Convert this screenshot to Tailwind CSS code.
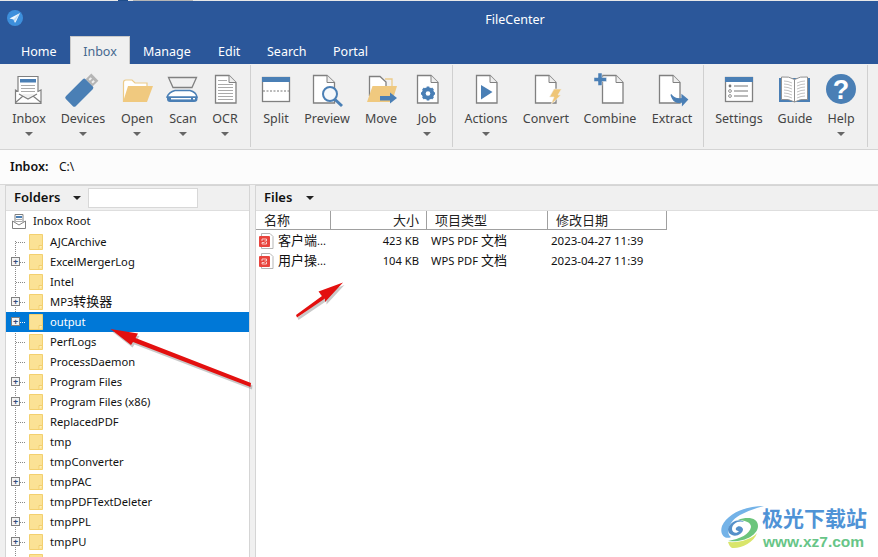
<!DOCTYPE html>
<html><head><meta charset="utf-8"><script src="https://cdn.jsdelivr.net/npm/@tailwindcss/browser@4"></script></head>
<body class="w-[878px] h-[557px] overflow-hidden relative bg-[#f0f0f0] font-['Noto_Sans','Noto_Sans_CJK_SC',sans-serif] text-[12px] text-[#222]">

<div class="flex h-px bg-[#e8e8e8]"><div class="w-[118px]"></div><div class="w-[10px] bg-[#1f4e8c]"></div><div class="w-[5px]"></div><div class="w-[60px] bg-[#b5b5b5]"></div></div>

<header class="h-[63px] bg-[#2b579a] flex flex-col">
  <div class="h-[35px] relative flex items-center justify-center pl-[152px] pt-[3px] text-white text-[12.5px]">
    <svg class="absolute left-[7px] top-[9px]" width="16" height="16" viewBox="0 0 16 16"><circle cx="8" cy="8" r="8" fill="#3d8fdc"/><path d="M13 3 L2.500 8.500 L6.500 9.500 L8 13 L9.500 10.500 Z" fill="#eef6fd"/><path d="M13 3 L6.500 9.500 L7.500 12 Z" fill="#b9d9f5"/></svg>
    <span>FileCenter</span>
  </div>
  <nav class="h-[28px] flex text-white text-[12.5px]">
    <a class="w-[70px] pl-[21px] pt-[7px]">Home</a>
    <a class="w-[60px] h-[28px] bg-[#f0f0f0] border border-b-0 border-[#c9c9c9] text-[#46688f] text-center pt-[6px]">Inbox</a>
    <a class="w-[73px] pl-[13px] pt-[7px]">Manage</a>
    <a class="w-[49px] pl-[15px] pt-[7px]">Edit</a>
    <a class="w-[66px] pl-[15px] pt-[7px]">Search</a>
    <a class="pl-[15px] pt-[7px]">Portal</a>
  </nav>
</header>

<section class="h-[86px] border-b border-[#d4d4d4] bg-[#f0f0f0] flex pl-[5px] text-[12.5px] text-[#444]">
  <!-- Inbox -->
  <div class="w-[48px] flex flex-col items-center pt-[6px] h-[84px]">
    <svg width="44" height="38" viewBox="0 0 44 38" class="shrink-0"><path d="M11 24V6.500H31V24" fill="#fff" stroke="#808080" stroke-width="1.200"/><rect x="13" y="9" width="16" height="3.500" fill="#4a7fb5"/><path d="M14 15.500H28M14 18.500H28M14 21.500H28" stroke="#aaa"/><path d="M8.500 20V33H34V20L21 28Z" fill="#fff"/><path d="M11 21.500 L8.500 20V33.300H34V20L31 21.500M8.500 32.500L16 26M34 32.500L26 26M12 24L21 29L30 24" fill="none" stroke="#808080" stroke-width="1.200"/></svg>
    <span class="leading-[18px] mt-[2px]">Inbox</span><i class="mt-[4px] w-0 h-0 border-x-[4px] border-x-transparent border-t-[4px] border-t-[#666]"></i>
  </div>
  <!-- Devices -->
  <div class="w-[60px] flex flex-col items-center pt-[6px] h-[84px]">
    <svg width="44" height="38" viewBox="0 0 44 38" class="shrink-0"><g transform="rotate(-45 19 22)"><rect x="4" y="15" width="28" height="14" rx="2" fill="#4a7fb5"/><rect x="32" y="17" width="8" height="10" fill="#b5b5b5"/><rect x="34" y="19" width="3" height="2" fill="#eee"/><rect x="34" y="23" width="3" height="2" fill="#eee"/></g></svg>
    <span class="leading-[18px] mt-[2px]">Devices</span><i class="mt-[4px] w-0 h-0 border-x-[4px] border-x-transparent border-t-[4px] border-t-[#666]"></i>
  </div>
  <!-- Open -->
  <div class="w-[48px] flex flex-col items-center pt-[6px] h-[84px]">
    <svg width="44" height="38" viewBox="0 0 44 38" class="shrink-0"><path d="M8.500 32V12.500Q8.500 10 11 10H17L20 13H32V18" fill="#fff" stroke="#eccb8a" stroke-width="1.200"/><path d="M8 32L13 16H38L32 32Z" fill="#f0c97f"/></svg>
    <span class="leading-[18px] mt-[2px]">Open</span><i class="mt-[4px] w-0 h-0 border-x-[4px] border-x-transparent border-t-[4px] border-t-[#666]"></i>
  </div>
  <!-- Scan -->
  <div class="w-[44px] flex flex-col items-center pt-[6px] h-[84px]">
    <svg width="44" height="38" viewBox="0 0 44 38" class="shrink-0"><path d="M7.500 7.500H35.500L31 17.500H12Z" fill="none" stroke="#808080" stroke-width="1.300"/><path d="M6 27Q8 22 14 20.500H29Q35 22 36 27Z" fill="#fff" stroke="#4a7fb5" stroke-width="1.500"/><path d="M6 27H36.500V29Q36.500 32 33 32H9Q6 32 6 29Z" fill="#4a7fb5"/><rect x="10" y="28" width="20" height="1.400" fill="#fff"/><rect x="32" y="28" width="2" height="1.400" fill="#fff"/></svg>
    <span class="leading-[18px] mt-[2px]">Scan</span><i class="mt-[4px] w-0 h-0 border-x-[4px] border-x-transparent border-t-[4px] border-t-[#666]"></i>
  </div>
  <!-- OCR -->
  <div class="w-[40px] flex flex-col items-center pt-[6px] h-[84px]">
    <svg width="44" height="38" viewBox="0 0 44 38" class="shrink-0"><path d="M12.500 5.500H26L33 12.500V33H12.500Z" fill="#fff" stroke="#808080" stroke-width="1.300"/><path d="M26 5.500V12.500H33" fill="#eee" stroke="#808080"/><path d="M15 10.500H24M15 14.500H30M15 17.500H30M15 20.500H30M15 23.500H30M15 26.500H30M15 29.500H30" stroke="#aaa"/></svg>
    <span class="leading-[18px] mt-[2px]">OCR</span><i class="mt-[4px] w-0 h-0 border-x-[4px] border-x-transparent border-t-[4px] border-t-[#666]"></i>
  </div>
  <div class="w-[5px]"></div>
  <div class="w-px h-[82px] mt-[1px] bg-[#d0d0d0]"></div>
  <!-- Split -->
  <div class="w-[50px] flex flex-col items-center pt-[6px] h-[84px]">
    <svg width="44" height="38" viewBox="0 0 44 38" class="shrink-0"><rect x="8.500" y="7.500" width="27" height="24" fill="#fff" stroke="#808080" stroke-width="1.300"/><rect x="8" y="7" width="28" height="5" fill="#4a7fb5"/><path d="M9 21H35" stroke="#777" stroke-dasharray="2 1.500"/></svg>
    <span class="leading-[18px] mt-[2px]">Split</span>
  </div>
  <!-- Preview -->
  <div class="w-[52px] flex flex-col items-center pt-[6px] h-[84px]">
    <svg width="44" height="38" viewBox="0 0 44 38" class="shrink-0"><path d="M8.500 5.500H22L29.500 12.500V33H8.500Z" fill="#fff" stroke="#808080" stroke-width="1.300"/><path d="M22 5.500V12.500H29.500" fill="#eee" stroke="#808080"/><circle cx="25" cy="24" r="7" fill="#f5f8fb" stroke="#4a7fb5" stroke-width="2"/><path d="M30 29.500L37 36" stroke="#4a7fb5" stroke-width="3"/></svg>
    <span class="leading-[18px] mt-[2px]">Preview</span>
  </div>
  <!-- Move -->
  <div class="w-[56px] flex flex-col items-center pt-[6px] h-[84px]">
    <svg width="44" height="38" viewBox="0 0 44 38" class="shrink-0"><path d="M26 9H33V18" fill="none" stroke="#eccb8a" stroke-width="1.300"/><path d="M10.500 26V6.500H21L27 12V18" fill="#fff" stroke="#808080" stroke-width="1.300"/><path d="M8 32L13.500 16H38L33 32Z" fill="#f0c97f"/><path d="M21 26H31V22.500L38 28L31 33.500V30.500H21Z" fill="#4a7fb5"/></svg>
    <span class="leading-[18px] mt-[2px]">Move</span>
  </div>
  <!-- Job -->
  <div class="w-[36px] flex flex-col items-center pt-[6px] h-[84px]">
    <svg width="44" height="38" viewBox="0 0 44 38" class="shrink-0"><path d="M12.500 5.500H26L33 12.500V33H12.500Z" fill="#fff" stroke="#808080" stroke-width="1.300"/><path d="M26 5.500V12.500H33" fill="#eee" stroke="#808080"/><circle cx="23" cy="23.500" r="4.500" fill="none" stroke="#4a7fb5" stroke-width="3.500"/><path d="M23 16.500V30.500M16 23.500H30M18 18.500L28 28.500M28 18.500L18 28.500" stroke="#4a7fb5" stroke-width="2.600"/><circle cx="23" cy="23.500" r="2.300" fill="#fff"/></svg>
    <span class="leading-[18px] mt-[2px]">Job</span><i class="mt-[4px] w-0 h-0 border-x-[4px] border-x-transparent border-t-[4px] border-t-[#666]"></i>
  </div>
  <div class="w-[7px]"></div>
  <div class="w-px h-[82px] mt-[1px] bg-[#d0d0d0]"></div>
  <!-- Actions -->
  <div class="w-[66px] flex flex-col items-center pt-[6px] h-[84px]">
    <svg width="44" height="38" viewBox="0 0 44 38" class="shrink-0"><path d="M12.500 5.500H26L33 12.500V33H12.500Z" fill="#fff" stroke="#808080" stroke-width="1.300"/><path d="M26 5.500V12.500H33" fill="#eee" stroke="#808080"/><path d="M17 15L28.500 22L17 29.500Z" fill="#4a7fb5"/></svg>
    <span class="leading-[18px] mt-[2px]">Actions</span><i class="mt-[4px] w-0 h-0 border-x-[4px] border-x-transparent border-t-[4px] border-t-[#666]"></i>
  </div>
  <!-- Convert -->
  <div class="w-[54px] flex flex-col items-center pt-[6px] h-[84px]">
    <svg width="44" height="38" viewBox="0 0 44 38" class="shrink-0"><path d="M11.500 5.500H25L32 12.500V33H11.500Z" fill="#fff" stroke="#808080" stroke-width="1.300"/><path d="M25 5.500V12.500H32" fill="#eee" stroke="#808080"/><path d="M30 19H37.500L34 25H37L27 34.500L30 27H25.500Z" fill="#efc677" stroke="#f0f0f0" stroke-width=".6"/></svg>
    <span class="leading-[18px] mt-[2px]">Convert</span>
  </div>
  <!-- Combine -->
  <div class="w-[74px] flex flex-col items-center pt-[6px] h-[84px]">
    <svg width="44" height="38" viewBox="0 0 44 38" class="shrink-0"><path d="M14.500 5.500H28L35 12.500V33H14.500Z" fill="#fff" stroke="#808080" stroke-width="1.300"/><path d="M28 5.500V12.500H35" fill="#eee" stroke="#808080"/><path d="M10 3H14V7.500H18.500V11.500H14V15.500H10V11.500H6V7.500H10Z" fill="#4a7fb5" stroke="#f0f0f0" stroke-width=".5"/></svg>
    <span class="leading-[18px] mt-[2px]">Combine</span>
  </div>
  <!-- Extract -->
  <div class="w-[50px] flex flex-col items-center pt-[6px] h-[84px]">
    <svg width="44" height="38" viewBox="0 0 44 38" class="shrink-0"><path d="M9.500 5.500H23L30 12.500V33H9.500Z" fill="#fff" stroke="#808080" stroke-width="1.300"/><path d="M23 5.500V12.500H30" fill="#eee" stroke="#808080"/><path d="M21 24.500Q25 30 32 28.500V25L37.500 29.500L32.500 35V31.500Q24 35 21 24.500Z" fill="#4a7fb5" stroke="#4a7fb5" stroke-width="1.200"/></svg>
    <span class="leading-[18px] mt-[2px]">Extract</span>
  </div>
  <div class="w-[6px]"></div>
  <div class="w-px h-[82px] mt-[1px] bg-[#d0d0d0]"></div>
  <!-- Settings -->
  <div class="w-[70px] flex flex-col items-center pt-[6px] h-[84px]">
    <svg width="44" height="38" viewBox="0 0 44 38" class="shrink-0"><rect x="8.500" y="7.500" width="27" height="24" fill="#fff" stroke="#808080" stroke-width="1.300"/><rect x="8" y="7" width="28" height="5" fill="#4a7fb5"/><circle cx="13" cy="16" r="1.400" fill="#777"/><circle cx="13" cy="21" r="1.400" fill="#fff" stroke="#777" stroke-width=".8"/><circle cx="13" cy="26" r="1.400" fill="#fff" stroke="#777" stroke-width=".8"/><path d="M17 16H31M17 21H31M17 26H31" stroke="#777"/></svg>
    <span class="leading-[18px] mt-[2px]">Settings</span>
  </div>
  <!-- Guide -->
  <div class="w-[42px] flex flex-col items-center pt-[6px] h-[84px]">
    <svg width="44" height="38" viewBox="0 0 44 38" class="shrink-0"><rect x="6" y="8" width="31" height="24" fill="#4a7fb5"/><path d="M8.500 7Q16 6 21.500 9.500Q27 6 34.500 7V29.500Q27 28.500 21.500 32Q16 28.500 8.500 29.500Z" fill="#fff" stroke="#909090"/><path d="M21.500 9.500V32" stroke="#909090"/><path d="M11 11Q15 11 19 13M11 14Q15 14 19 16M11 17Q15 17 19 19M11 20Q15 20 19 22M11 23Q15 23 19 25M11 26Q15 26 19 28M32 11Q28 11 24 13M32 14Q28 14 24 16M32 17Q28 17 24 19M32 20Q28 20 24 22M32 23Q28 23 24 25M32 26Q28 26 24 28" fill="none" stroke="#bbb" stroke-width=".9"/></svg>
    <span class="leading-[18px] mt-[2px]">Guide</span>
  </div>
  <!-- Help -->
  <div class="w-[50px] flex flex-col items-center pt-[6px] h-[84px]">
    <svg width="44" height="38" viewBox="0 0 44 38" class="shrink-0"><circle cx="22" cy="19" r="15" fill="#4a7fb5"/><text x="22" y="29" text-anchor="middle" fill="#fff" font-size="27" font-weight="700" font-family="Liberation Sans">?</text></svg>
    <span class="leading-[18px] mt-[2px]">Help</span><i class="mt-[4px] w-0 h-0 border-x-[4px] border-x-transparent border-t-[4px] border-t-[#666]"></i>
  </div>
  <div class="w-px"></div>
  <div class="w-px h-[82px] mt-[1px] bg-[#d0d0d0]"></div>
</section>

<div class="h-[35px] bg-[#fcfcfc] border-b border-[#d8d8d8] flex items-center pl-[10px] text-[12px] text-[#111]">
  <b class="font-semibold text-[12.5px] w-[49px]">Inbox:</b><span>C:\</span>
</div>

<main class="flex pl-[5px] gap-[5px] h-[372px]">
  <!-- Folders -->
  <aside class="w-[245px] bg-white border border-b-0 border-[#d5d5d5] flex flex-col overflow-hidden">
    <div class="h-[25px] shrink-0 bg-[#f0f0f0] flex items-center pl-[8px] text-[#111] border-b border-[#dedede]">
      <b class="font-semibold text-[13px] w-[59px]">Folders</b>
      <i class="w-0 h-0 border-x-[4px] border-x-transparent border-t-[4px] border-t-[#222]"></i>
      <span class="ml-[7px] w-[110px] h-[20px] bg-white border border-[#d8d8d8]"></span>
    </div>
    <div class="relative flex flex-col text-[#111] text-[11.2px]">
      <div class="absolute left-[9px] top-[30px] bottom-0 w-0 border-l border-dotted border-[#888]"></div>
      <div class="h-[21px] flex items-center pl-[5px] gap-[6px] shrink-0 pb-px">
        <svg width="16" height="17" viewBox="0 0 16 17"><path d="M4 9V1.500H12V9" fill="#fff" stroke="#808080"/><rect x="5" y="3" width="6" height="2" fill="#4a7fb5"/><path d="M5 6.500H11M5 8.500H11" stroke="#aaa"/><path d="M1.500 8V15.500H14.500V8L8 12Z" fill="#fff" stroke="#808080"/></svg>
        <span>Inbox Root</span>
      </div>

      <div class="h-[20px] flex items-center relative shrink-0"><span class="w-[10px]"></span><span class="w-[9px] border-t border-dotted border-[#888]"></span><svg class="mr-[7px] ml-[4px]" width="14" height="16" viewBox="0 0 14 16"><path d="M.5.500H13.500V15.500H.5Z" fill="#fbe295" stroke="#f3d06f"/><path d="M10 15.500V11.500H13.500" fill="#fdeebb" stroke="#f3d06f"/></svg><span>AJCArchive</span></div>

      <div class="h-[20px] flex items-center relative shrink-0"><span class="absolute left-[5px] top-[5px] w-[9px] h-[9px] bg-[#f4f4f4] border border-[#808080] flex items-center justify-center"><span class="text-[#334a7c] text-[9px] leading-none font-bold">+</span></span><span class="w-[10px]"></span><span class="w-[9px] border-t border-dotted border-[#888]"></span><svg class="mr-[7px] ml-[4px]" width="14" height="16" viewBox="0 0 14 16"><path d="M.5.500H13.500V15.500H.5Z" fill="#fbe295" stroke="#f3d06f"/><path d="M10 15.500V11.500H13.500" fill="#fdeebb" stroke="#f3d06f"/></svg><span>ExcelMergerLog</span></div>

      <div class="h-[20px] flex items-center relative shrink-0"><span class="w-[10px]"></span><span class="w-[9px] border-t border-dotted border-[#888]"></span><svg class="mr-[7px] ml-[4px]" width="14" height="16" viewBox="0 0 14 16"><path d="M.5.500H13.500V15.500H.5Z" fill="#fbe295" stroke="#f3d06f"/><path d="M10 15.500V11.500H13.500" fill="#fdeebb" stroke="#f3d06f"/></svg><span>Intel</span></div>

      <div class="h-[20px] flex items-center relative shrink-0"><span class="absolute left-[5px] top-[5px] w-[9px] h-[9px] bg-[#f4f4f4] border border-[#808080] flex items-center justify-center"><span class="text-[#334a7c] text-[9px] leading-none font-bold">+</span></span><span class="w-[10px]"></span><span class="w-[9px] border-t border-dotted border-[#888]"></span><svg class="mr-[7px] ml-[4px]" width="14" height="16" viewBox="0 0 14 16"><path d="M.5.500H13.500V15.500H.5Z" fill="#fbe295" stroke="#f3d06f"/><path d="M10 15.500V11.500H13.500" fill="#fdeebb" stroke="#f3d06f"/></svg><span>MP3<span class="text-[13px]">转换器</span></span></div>

      <div class="h-[20px] flex items-center relative shrink-0 bg-[#0078d7] text-white"><span class="absolute left-[5px] top-[5px] w-[9px] h-[9px] bg-[#f4f4f4] border border-[#808080] flex items-center justify-center"><span class="text-[#334a7c] text-[9px] leading-none font-bold">+</span></span><span class="w-[10px]"></span><span class="w-[9px] border-t border-dotted border-white"></span><svg class="mr-[7px] ml-[4px]" width="14" height="16" viewBox="0 0 14 16"><path d="M.5.500H13.500V15.500H.5Z" fill="#fbe295" stroke="#f3d06f"/><path d="M10 15.500V11.500H13.500" fill="#fdeebb" stroke="#f3d06f"/></svg><span>output</span></div>

      <div class="h-[20px] flex items-center relative shrink-0"><span class="w-[10px]"></span><span class="w-[9px] border-t border-dotted border-[#888]"></span><svg class="mr-[7px] ml-[4px]" width="14" height="16" viewBox="0 0 14 16"><path d="M.5.500H13.500V15.500H.5Z" fill="#fbe295" stroke="#f3d06f"/><path d="M10 15.500V11.500H13.500" fill="#fdeebb" stroke="#f3d06f"/></svg><span>PerfLogs</span></div>

      <div class="h-[20px] flex items-center relative shrink-0"><span class="w-[10px]"></span><span class="w-[9px] border-t border-dotted border-[#888]"></span><svg class="mr-[7px] ml-[4px]" width="14" height="16" viewBox="0 0 14 16"><path d="M.5.500H13.500V15.500H.5Z" fill="#fbe295" stroke="#f3d06f"/><path d="M10 15.500V11.500H13.500" fill="#fdeebb" stroke="#f3d06f"/></svg><span>ProcessDaemon</span></div>

      <div class="h-[20px] flex items-center relative shrink-0"><span class="absolute left-[5px] top-[5px] w-[9px] h-[9px] bg-[#f4f4f4] border border-[#808080] flex items-center justify-center"><span class="text-[#334a7c] text-[9px] leading-none font-bold">+</span></span><span class="w-[10px]"></span><span class="w-[9px] border-t border-dotted border-[#888]"></span><svg class="mr-[7px] ml-[4px]" width="14" height="16" viewBox="0 0 14 16"><path d="M.5.500H13.500V15.500H.5Z" fill="#fbe295" stroke="#f3d06f"/><path d="M10 15.500V11.500H13.500" fill="#fdeebb" stroke="#f3d06f"/></svg><span>Program Files</span></div>

      <div class="h-[20px] flex items-center relative shrink-0"><span class="absolute left-[5px] top-[5px] w-[9px] h-[9px] bg-[#f4f4f4] border border-[#808080] flex items-center justify-center"><span class="text-[#334a7c] text-[9px] leading-none font-bold">+</span></span><span class="w-[10px]"></span><span class="w-[9px] border-t border-dotted border-[#888]"></span><svg class="mr-[7px] ml-[4px]" width="14" height="16" viewBox="0 0 14 16"><path d="M.5.500H13.500V15.500H.5Z" fill="#fbe295" stroke="#f3d06f"/><path d="M10 15.500V11.500H13.500" fill="#fdeebb" stroke="#f3d06f"/></svg><span>Program Files (x86)</span></div>

      <div class="h-[20px] flex items-center relative shrink-0"><span class="w-[10px]"></span><span class="w-[9px] border-t border-dotted border-[#888]"></span><svg class="mr-[7px] ml-[4px]" width="14" height="16" viewBox="0 0 14 16"><path d="M.5.500H13.500V15.500H.5Z" fill="#fbe295" stroke="#f3d06f"/><path d="M10 15.500V11.500H13.500" fill="#fdeebb" stroke="#f3d06f"/></svg><span>ReplacedPDF</span></div>

      <div class="h-[20px] flex items-center relative shrink-0"><span class="w-[10px]"></span><span class="w-[9px] border-t border-dotted border-[#888]"></span><svg class="mr-[7px] ml-[4px]" width="14" height="16" viewBox="0 0 14 16"><path d="M.5.500H13.500V15.500H.5Z" fill="#fbe295" stroke="#f3d06f"/><path d="M10 15.500V11.500H13.500" fill="#fdeebb" stroke="#f3d06f"/></svg><span>tmp</span></div>

      <div class="h-[20px] flex items-center relative shrink-0"><span class="w-[10px]"></span><span class="w-[9px] border-t border-dotted border-[#888]"></span><svg class="mr-[7px] ml-[4px]" width="14" height="16" viewBox="0 0 14 16"><path d="M.5.500H13.500V15.500H.5Z" fill="#fbe295" stroke="#f3d06f"/><path d="M10 15.500V11.500H13.500" fill="#fdeebb" stroke="#f3d06f"/></svg><span>tmpConverter</span></div>

      <div class="h-[20px] flex items-center relative shrink-0"><span class="absolute left-[5px] top-[5px] w-[9px] h-[9px] bg-[#f4f4f4] border border-[#808080] flex items-center justify-center"><span class="text-[#334a7c] text-[9px] leading-none font-bold">+</span></span><span class="w-[10px]"></span><span class="w-[9px] border-t border-dotted border-[#888]"></span><svg class="mr-[7px] ml-[4px]" width="14" height="16" viewBox="0 0 14 16"><path d="M.5.500H13.500V15.500H.5Z" fill="#fbe295" stroke="#f3d06f"/><path d="M10 15.500V11.500H13.500" fill="#fdeebb" stroke="#f3d06f"/></svg><span>tmpPAC</span></div>

      <div class="h-[20px] flex items-center relative shrink-0"><span class="w-[10px]"></span><span class="w-[9px] border-t border-dotted border-[#888]"></span><svg class="mr-[7px] ml-[4px]" width="14" height="16" viewBox="0 0 14 16"><path d="M.5.500H13.500V15.500H.5Z" fill="#fbe295" stroke="#f3d06f"/><path d="M10 15.500V11.500H13.500" fill="#fdeebb" stroke="#f3d06f"/></svg><span>tmpPDFTextDeleter</span></div>

      <div class="h-[20px] flex items-center relative shrink-0"><span class="absolute left-[5px] top-[5px] w-[9px] h-[9px] bg-[#f4f4f4] border border-[#808080] flex items-center justify-center"><span class="text-[#334a7c] text-[9px] leading-none font-bold">+</span></span><span class="w-[10px]"></span><span class="w-[9px] border-t border-dotted border-[#888]"></span><svg class="mr-[7px] ml-[4px]" width="14" height="16" viewBox="0 0 14 16"><path d="M.5.500H13.500V15.500H.5Z" fill="#fbe295" stroke="#f3d06f"/><path d="M10 15.500V11.500H13.500" fill="#fdeebb" stroke="#f3d06f"/></svg><span>tmpPPL</span></div>

      <div class="h-[20px] flex items-center relative shrink-0"><span class="absolute left-[5px] top-[5px] w-[9px] h-[9px] bg-[#f4f4f4] border border-[#808080] flex items-center justify-center"><span class="text-[#334a7c] text-[9px] leading-none font-bold">+</span></span><span class="w-[10px]"></span><span class="w-[9px] border-t border-dotted border-[#888]"></span><svg class="mr-[7px] ml-[4px]" width="14" height="16" viewBox="0 0 14 16"><path d="M.5.500H13.500V15.500H.5Z" fill="#fbe295" stroke="#f3d06f"/><path d="M10 15.500V11.500H13.500" fill="#fdeebb" stroke="#f3d06f"/></svg><span>tmpPU</span></div>

      <div class="h-[20px] flex items-center relative shrink-0"><span class="w-[10px]"></span><span class="w-[9px]"></span><svg class="mr-[7px] ml-[4px]" width="14" height="16" viewBox="0 0 14 16"><path d="M.5.500H13.500V15.500H.5Z" fill="#fbe295" stroke="#f3d06f"/></svg></div>
    </div>
  </aside>

  <!-- Files -->
  <section class="flex-1 bg-white border-l border-t border-[#d5d5d5] flex flex-col text-[#111]">
    <div class="h-[25px] shrink-0 bg-[#f0f0f0] flex items-center pl-[8px] border-b border-[#dedede]">
      <b class="font-semibold text-[13px] w-[42px]">Files</b>
      <i class="w-0 h-0 border-x-[4px] border-x-transparent border-t-[4px] border-t-[#222]"></i>
    </div>
    <div class="h-[19px] shrink-0 flex text-[13px] text-[#222] leading-[18px] border-b border-[#a0a0a0] w-[411px]">
      <span class="w-[75px] pl-[8px] border-r border-[#a0a0a0]">名称</span>
      <span class="w-[96px] pr-[7px] text-right border-r border-[#a0a0a0]">大小</span>
      <span class="w-[121px] pl-[8px] border-r border-[#a0a0a0]">项目类型</span>
      <span class="w-[119px] pl-[8px] border-r border-[#a0a0a0]">修改日期</span>
    </div>
    <div class="flex flex-col text-[11.2px] text-[#111] mt-[1px]">
      <div class="h-[20px] flex items-center">
        <svg class="ml-[2px] shrink-0" width="16" height="16" viewBox="0 0 16 16"><path d="M3.500.5H12L15 3.500V15.500H3.500Z" fill="#fff" stroke="#b5b5b5"/><rect x="1" y="3" width="11" height="11" rx="1" fill="#e8443d"/><path d="M4 8V6H8.500V8H6.500M8.500 9V11H4V9.500H6.500" fill="none" stroke="#fff" stroke-width=".7"/></svg>
        <span class="ml-[4px] w-[62px] truncate shrink-0"><span class="text-[13px]">客户端</span>...</span>
        <span class="w-[79px] text-right shrink-0">423 KB</span>
        <span class="ml-[12px] w-[120px] shrink-0">WPS PDF <span class="text-[13px]">文档</span></span><span class="text-[11.5px]">2023-04-27 11:39</span>
      </div>
      <div class="h-[20px] flex items-center">
        <svg class="ml-[2px] shrink-0" width="16" height="16" viewBox="0 0 16 16"><path d="M3.500.5H12L15 3.500V15.500H3.500Z" fill="#fff" stroke="#b5b5b5"/><rect x="1" y="3" width="11" height="11" rx="1" fill="#e8443d"/><path d="M4 8V6H8.500V8H6.500M8.500 9V11H4V9.500H6.500" fill="none" stroke="#fff" stroke-width=".7"/></svg>
        <span class="ml-[4px] w-[62px] truncate shrink-0"><span class="text-[13px]">用户操</span>...</span>
        <span class="w-[79px] text-right shrink-0">104 KB</span>
        <span class="ml-[12px] w-[120px] shrink-0">WPS PDF <span class="text-[13px]">文档</span></span><span class="text-[11.5px]">2023-04-27 11:39</span>
      </div>
    </div>
  </section>
</main>

<!-- Annotation arrows -->
<svg class="absolute left-0 top-0 pointer-events-none" width="878" height="557" viewBox="0 0 878 557">
  <g fill="#777" opacity=".4" transform="translate(1.500 2.500)"><path d="M110.500 329L138 333.500L135.500 338L251 383L250.500 387L133 342L131 345Z"/><path d="M343 282.500L318.500 291.500L322 296L296 315L297 317.500L325 298.500L325 302Z"/></g>
  <g fill="#e3100f"><path d="M110.500 329L138 333.500L135.500 338L251 383L250.500 387L133 342L131 345Z"/><path d="M343 282.500L318.500 291.500L322 296L296 315L297 317.500L325 298.500L325 302Z"/></g>
</svg>

<!-- Watermark -->
<div class="absolute left-[720px] top-[505px] w-[155px] h-[45px] pointer-events-none">
  <svg class="absolute left-0 top-0" width="48" height="46" viewBox="0 0 48 46"><path d="M44 1C26 1 8 8 2 21C-1 30 6 35 11 32C5 28 9 16 20 10C28 6 36 3 44 1Z" fill="#74b3e8"/><path d="M8 24C10 16 20 13 24 17C18 15 12 19 12 24C12 28 17 29 19 26C17 26 15 25 16 23C18 20 22 21 23 24C23 29 16 32 12 30C9 29 8 27 8 24Z" fill="#5590c9"/><path d="M18 15C28 11 38 13 38 21C38 30 24 38 8 36C20 34 30 29 31 22C31 17 24 15 18 15Z" fill="#6cc57c"/><path d="M8 37C20 38 32 34 37 28C34 38 20 44 12 43C10 42 9 40 8 37Z" fill="#d9e56b"/></svg>
  <span class="absolute left-[42px] top-[-1px] whitespace-nowrap text-[21px] leading-[28px] font-bold text-[#4f93d6]">极光下载站</span>
  <span class="absolute left-[43px] top-[27px] whitespace-nowrap text-[15.5px] leading-[20px] font-semibold text-[#67c587] font-['Liberation_Sans',sans-serif]">www.xz7.com</span>
</div>
</body></html>
